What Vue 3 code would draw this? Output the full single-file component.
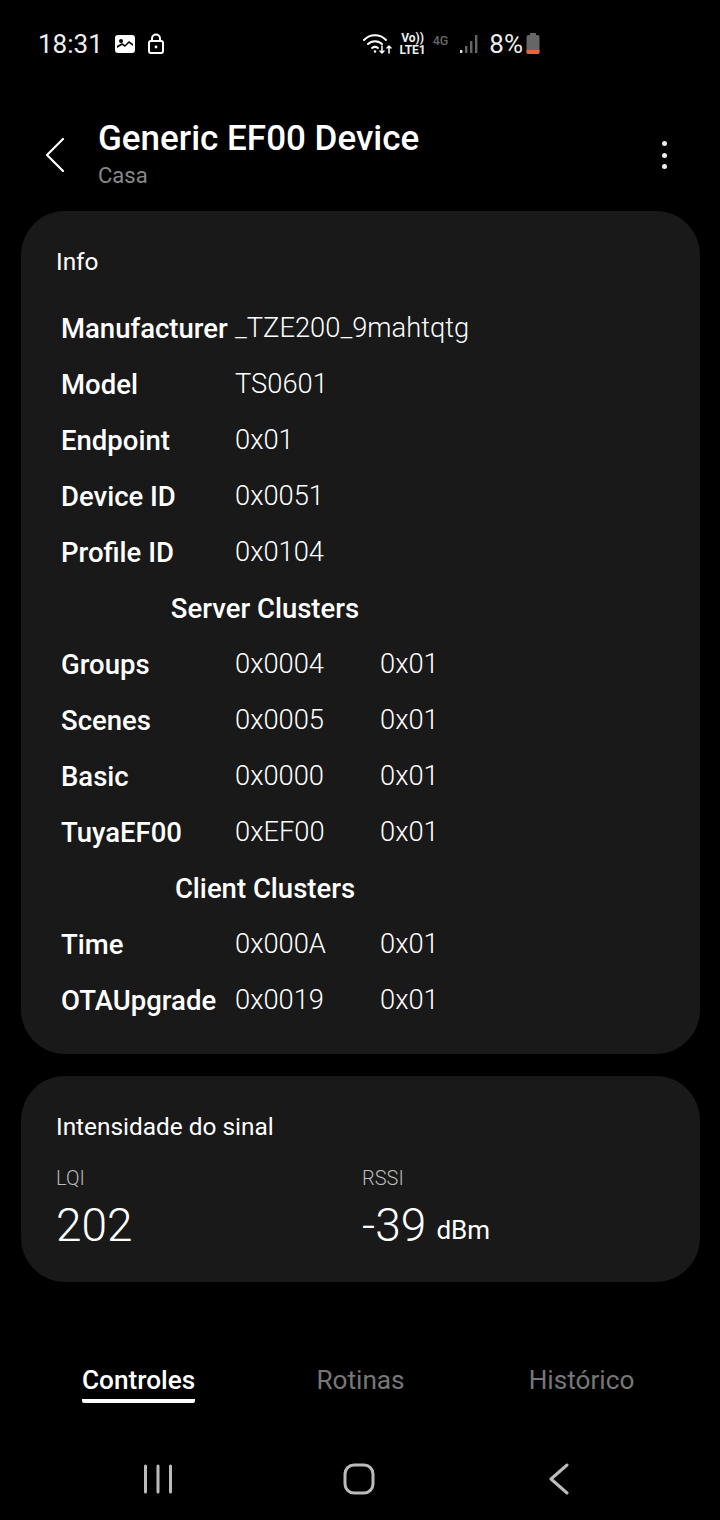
<template>
  <div class="screen">
    <div class="status-bar">
      <div class="status-left">
        <span class="clock">18:31</span>
        <svg class="ico-img" width="22" height="20" viewBox="0 0 22 20">
          <rect x="1" y="1" width="20" height="18" rx="3" fill="#fff" />
          <circle cx="7" cy="7" r="2" fill="#000" />
          <path d="M3 14 L8 11 L11 13 L15 9 L19 12 L19 10 L15 7 L11 11 L8 9 L3 12 Z" fill="#000" />
        </svg>
        <svg class="ico-lock" width="18" height="22" viewBox="0 0 18 22" fill="none" stroke="#fff" stroke-width="2">
          <rect x="2" y="8" width="14" height="12" rx="2" />
          <path d="M5 8 V5.5 a4 4 0 0 1 8 0 V8" />
          <circle cx="9" cy="14" r="1.4" fill="#fff" stroke="none" />
        </svg>
      </div>
      <div class="status-right">
        <svg width="30" height="22" viewBox="0 0 30 22" fill="none" stroke="#fff" stroke-width="2" stroke-linecap="round">
          <path d="M1 7 a15 15 0 0 1 22 0" />
          <path d="M5 11 a10 10 0 0 1 14 0" />
          <path d="M9 15 a5 5 0 0 1 6 0" />
          <circle cx="12" cy="18.5" r="1.2" fill="#fff" stroke="none" />
          <path d="M19 13 V20 M17 18 L19 20 L21 18" stroke-width="1.5" />
          <path d="M26 20 V13 M24 15 L26 13 L28 15" stroke-width="1.5" />
        </svg>
        <div class="volte"><span>Vo))</span><span>LTE1</span></div>
        <span class="net">4G</span>
        <svg class="signal" width="20" height="22" viewBox="0 0 20 22">
          <rect x="1" y="17" width="2.4" height="3" fill="#ddd" />
          <rect x="6" y="13" width="2.4" height="7" fill="#666" />
          <rect x="11" y="8" width="2.4" height="12" fill="#666" />
          <rect x="16" y="2" width="2.4" height="18" fill="#666" />
        </svg>
        <span class="pct">8%</span>
        <svg width="14" height="22" viewBox="0 0 14 22">
          <rect x="4" y="0" width="6" height="3" fill="#666" />
          <rect x="0.5" y="2" width="13" height="19" rx="2" fill="#666" />
          <path d="M0.5 17 H13.5 V19 a2 2 0 0 1 -2 2 H2.5 a2 2 0 0 1 -2 -2 Z" fill="#e8643c" />
        </svg>
      </div>
    </div>

    <header class="app-bar">
      <svg class="back" width="20" height="34" viewBox="0 0 20 34" fill="none" stroke="#fff" stroke-width="2.2" stroke-linecap="round" stroke-linejoin="round">
        <path d="M18 1 L2 17 L18 33" />
      </svg>
      <div class="titles">
        <h1>{{ title }}</h1>
        <p>Casa</p>
      </div>
      <div class="more"><i></i><i></i><i></i></div>
    </header>

    <section class="card info">
      <h2>Info</h2>
      <div class="table">
        <template v-for="row in rows" :key="row.label">
          <div v-if="row.head" class="head">{{ row.label }}</div>
          <div v-else class="row">
            <span class="label">{{ row.label }}</span>
            <span class="val">{{ row.value }}</span>
            <span v-if="row.ep" class="val">{{ row.ep }}</span>
          </div>
        </template>
      </div>
    </section>

    <section class="card signal-card">
      <h2>Intensidade do sinal</h2>
      <div class="metrics">
        <div>
          <div class="m-label">LQI</div>
          <div class="m-value">202</div>
        </div>
        <div>
          <div class="m-label">RSSI</div>
          <div class="m-value">-39 <small>dBm</small></div>
        </div>
      </div>
    </section>

    <nav class="tabs">
      <div v-for="(t, i) in tabs" :key="t" class="tab" :class="{ active: i === 0 }">{{ t }}</div>
    </nav>

    <div class="nav-bar">
      <svg width="30" height="30" viewBox="0 0 30 30" stroke="#bbb" stroke-width="3" stroke-linecap="round">
        <path d="M2.5 2 V28 M15 2 V28 M27.5 2 V28" />
      </svg>
      <svg class="home" width="32" height="32" viewBox="0 0 32 32" fill="none" stroke="#bbb" stroke-width="3">
        <rect x="2" y="2" width="28" height="28" rx="9" />
      </svg>
      <svg width="20" height="32" viewBox="0 0 20 32" fill="none" stroke="#bbb" stroke-width="3" stroke-linecap="round" stroke-linejoin="round">
        <path d="M18 2 L2 16 L18 30" />
      </svg>
    </div>
  </div>
</template>

<script setup>
const title = 'Generic EF00 Device'

const rows = [
  { label: 'Manufacturer', value: '_TZE200_9mahtqtg' },
  { label: 'Model', value: 'TS0601' },
  { label: 'Endpoint', value: '0x01' },
  { label: 'Device ID', value: '0x0051' },
  { label: 'Profile ID', value: '0x0104' },
  { label: 'Server Clusters', head: true },
  { label: 'Groups', value: '0x0004', ep: '0x01' },
  { label: 'Scenes', value: '0x0005', ep: '0x01' },
  { label: 'Basic', value: '0x0000', ep: '0x01' },
  { label: 'TuyaEF00', value: '0xEF00', ep: '0x01' },
  { label: 'Client Clusters', head: true },
  { label: 'Time', value: '0x000A', ep: '0x01' },
  { label: 'OTAUpgrade', value: '0x0019', ep: '0x01' },
]

const tabs = ['Controles', 'Rotinas', 'Histórico']
</script>

<style>
html, body {
  margin: 0;
  background: #000;
}
</style>

<style scoped>
.screen {
  width: 720px;
  height: 1520px;
  background: #000;
  color: #fff;
  font-family: Roboto, "Liberation Sans", sans-serif;
  display: flex;
  flex-direction: column;
  overflow: hidden;
}

.status-bar {
  height: 32px;
  margin-top: 28px;
  padding: 0 180px 0 38px;
  display: flex;
  justify-content: space-between;
  align-items: center;
  color: #eee;
}
.status-left,
.status-right {
  display: flex;
  align-items: center;
}
.clock {
  font-size: 26px;
  margin-right: 11px;
}
.ico-img {
  margin-right: 11px;
}
.volte {
  display: flex;
  flex-direction: column;
  font-size: 12px;
  line-height: 12px;
  font-weight: 700;
  margin-left: 6px;
  text-align: center;
}
.net {
  color: #666;
  font-size: 12.5px;
  font-weight: 500;
  margin: -8px 0 0 7px;
}
.signal {
  margin-left: 11px;
}
.pct {
  font-size: 26px;
  margin: 0 3px 0 10px;
}

.app-bar {
  height: 84px;
  margin-top: 56px;
  display: flex;
  align-items: flex-start;
  padding: 0 45px;
}
.back {
  margin: 22px 33px 0 0;
  flex-shrink: 0;
}
.titles {
  flex: 1;
  margin-top: 1px;
}
.titles h1 {
  margin: 0;
  font-size: 35px;
  line-height: 44px;
  font-weight: 500;
}
.titles p {
  margin: 1px 0 0;
  font-size: 22px;
  line-height: 28px;
  color: #888;
}
.more {
  display: flex;
  flex-direction: column;
  gap: 6.5px;
  margin: 25px 8px 0 0;
}
.more i {
  width: 5px;
  height: 5px;
  border-radius: 50%;
  background: #eee;
}

.card {
  margin: 0 20px 0 21px;
  background: #191919;
  border-radius: 44px;
  padding: 0 35px;
}
.card h2 {
  margin: 0;
  font-size: 24.4px;
  font-weight: 400;
  line-height: 28px;
}
.info {
  margin-top: 11px;
  height: 843px;
  box-sizing: border-box;
  padding-top: 37px;
}
.table {
  margin-top: 24px;
  padding-left: 5px;
}
.row,
.head {
  height: 56px;
  display: flex;
  align-items: center;
  font-size: 27.5px;
}
.head {
  justify-content: center;
  font-weight: 500;
  width: 408px;
}
.label {
  width: 174px;
  flex-shrink: 0;
  font-weight: 500;
}
.val {
  width: 145px;
  flex-shrink: 0;
  font-size: 27.3px;
  font-weight: 300;
  white-space: nowrap;
}

.signal-card {
  margin-top: 22px;
  height: 206px;
  box-sizing: border-box;
  padding-top: 37px;
}
.metrics {
  display: flex;
  margin-top: 23px;
}
.metrics > div {
  flex: none;
  width: 306px;
}
.m-label {
  font-size: 20px;
  line-height: 28px;
  font-weight: 300;
  color: #bbb;
}
.m-value {
  margin-top: 5px;
  font-size: 46px;
  line-height: 56px;
  font-weight: 300;
}
.m-value small {
  font-size: 26px;
  line-height: 1;
  font-weight: 400;
  margin-left: -1px;
  position: relative;
  top: -2px;
}

.tabs {
  margin-top: 70px;
  height: 56px;
  display: flex;
  align-items: flex-start;
  padding: 0 28px 0 26px;
}
.tab {
  flex: 1;
  text-align: center;
  font-size: 26.2px;
  line-height: 56px;
  color: #777;
}
.tab.active {
  flex: none;
  width: 113px;
  height: 47px;
  margin: 0 55px 0 56px;
  color: #fff;
  font-weight: 500;
  border-bottom: 4px solid #fff;
  border-radius: 0 0 2px 2px;
}

.nav-bar {
  margin-top: 55px;
  height: 32px;
  padding: 0 151px 0 143px;
  display: flex;
  justify-content: space-between;
  align-items: center;
}
.home {
  margin-left: -4px;
}
</style>
